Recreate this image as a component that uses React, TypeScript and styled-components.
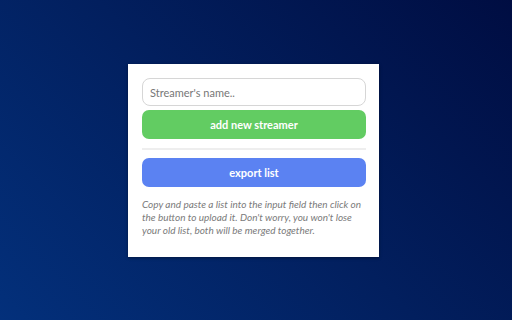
import React from 'react';
import styled, { createGlobalStyle } from 'styled-components';

const GlobalStyle = createGlobalStyle`
  html, body {
    margin: 0;
    padding: 0;
    width: 512px;
    height: 320px;
    overflow: hidden;
  }
  body {
    font-family: Lato, 'Noto Sans', sans-serif;
  }
`;

export default function App() {
  return (
    <>
      <GlobalStyle />
      <Page>
        <Card>
          <NameInput placeholder="Streamer's name.." />
          <ActionButton $color="#62cc62">add new streamer</ActionButton>
          <Divider />
          <ActionButton $color="#5b82f2">export list</ActionButton>
          <Hint>
            Copy and paste a list into the input field then click on the button to upload it. Don't
            worry, you won't lose your old list, both will be merged together.
          </Hint>
        </Card>
      </Page>
    </>
  );
}

const Page = styled.div`
  box-sizing: border-box;
  width: 512px;
  height: 320px;
  padding-right: 5px;
  display: flex;
  align-items: center;
  justify-content: center;
  background: linear-gradient(45deg, #03307b 0%, #021f5e 50%, #000d42 100%);
`;

const Card = styled.div`
  box-sizing: border-box;
  width: 251px;
  height: 193px;
  margin-top: 1px;
  padding: 14px 13px 0 14px;
  background: #fff;
  display: flex;
  flex-direction: column;
  box-shadow: 0 1px 3px rgba(0, 0, 0, 0.4);
`;

const NameInput = styled.input`
  box-sizing: border-box;
  width: 100%;
  height: 28px;
  padding: 0 7px;
  border: 1px solid #d6d6d6;
  border-radius: 8px;
  font-family: Lato, sans-serif;
  font-size: 11px;
  color: #555;
  outline: none;
  &::placeholder {
    color: #777;
  }
`;

const ActionButton = styled.button<{ $color: string }>`
  box-sizing: border-box;
  width: 100%;
  height: 29px;
  margin-top: 4px;
  border: none;
  border-radius: 7px;
  background: ${({ $color }) => $color};
  color: #fff;
  font-family: Lato, sans-serif;
  font-weight: 700;
  font-size: 11px;
  cursor: pointer;
`;

const Divider = styled.hr`
  width: 100%;
  margin: 9px 0 4px;
  border: none;
  border-top: 2px solid #eeeeee;
`;

const Hint = styled.p`
  margin: 11px 0 0;
  font-family: Lato, sans-serif;
  font-style: italic;
  font-size: 10px;
  line-height: 13px;
  color: #7a7a7a;
`;
